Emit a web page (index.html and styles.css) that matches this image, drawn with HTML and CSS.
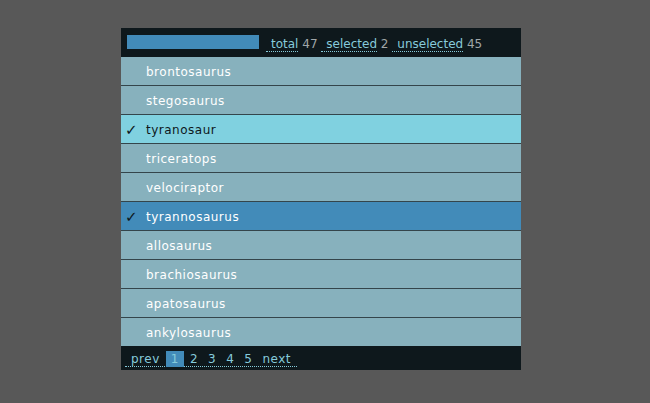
FILE: index.html
```html
<!DOCTYPE html>
<html lang="en">
<head>
    <meta charset="UTF-8">
    <title>Dinosaur picker</title>
    <link rel="stylesheet" href="styles.css">
</head>
<body>
    <div class="picker">
        <div class="picker-head">
            <div class="progress"></div>
            <div class="counts">
                <a href="#" class="count-link">total</a> 47
                <a href="#" class="count-link">selected</a> 2
                <a href="#" class="count-link">unselected</a> 45
            </div>
        </div>
        <ul class="items">
            <li class="item">brontosaurus</li>
            <li class="item">stegosaurus</li>
            <li class="item item-hover"><span class="check">&#10003;</span>tyranosaur</li>
            <li class="item">triceratops</li>
            <li class="item">velociraptor</li>
            <li class="item item-selected"><span class="check">&#10003;</span>tyrannosaurus</li>
            <li class="item">allosaurus</li>
            <li class="item">brachiosaurus</li>
            <li class="item">apatosaurus</li>
            <li class="item">ankylosaurus</li>
        </ul>
        <div class="pager">
            <span class="pager-links">
                <a href="#" class="page">prev</a><a href="#" class="page page-current">1</a><a href="#" class="page">2</a><a href="#" class="page">3</a><a href="#" class="page">4</a><a href="#" class="page">5</a><a href="#" class="page">next</a>
            </span>
        </div>
    </div>
</body>
</html>
```

FILE: styles.css
```css
body {
    margin: 0;
    background-color: #585858;
    font-family: 'DejaVu Sans', Verdana, sans-serif;
    font-size: 12px;
    letter-spacing: 0.5px;
}
.picker {
    width: 400px;
    margin: 28px 0 0 121px;
    background-color: #0e181c;
}
.picker-head {
    display: flex;
    align-items: center;
    height: 29px;
    padding: 0 6px;
    letter-spacing: 0;
}
.progress {
    width: 132px;
    height: 14px;
    background-color: #428bb9;
    margin-top: -1px;
}
.counts {
    margin-left: 7px;
    color: #a0a6a8;
    padding-top: 2px;
}
.count-link {
    color: #86cbdb;
    text-decoration: none;
    border-bottom: 1px dotted #86cbdb;
    padding-left: 5px;
}
.items {
    list-style: none;
    margin: 0;
    padding: 0;
}
.item {
    position: relative;
    height: 28px;
    line-height: 30px;
    padding-left: 25px;
    background-color: #87b1bd;
    border-bottom: 1px solid #34454b;
    color: #ffffff;
}
.item:last-child {
    border-bottom: none;
}
.item-hover {
    background-color: #80d1e0;
    color: #0e181c;
}
.item-selected {
    background-color: #428bb9;
    color: #ffffff;
}
.check {
    position: absolute;
    left: 4px;
    top: 0;
    color: #0e181c;
    font-size: 15px;
}
.pager {
    height: 24px;
    padding: 0 4px;
    display: flex;
    align-items: center;
}
.pager-links {
    border-bottom: 1px dotted #86cbdb;
    padding-top: 2px;
}
.page {
    color: #86cbdb;
    text-decoration: none;
    padding: 0 4px;
    margin-right: 2px;
}
.page:first-child {
    padding-left: 6px;
}
.page-current {
    background-color: #428bb9;
    padding: 1px 5px;
}
```
